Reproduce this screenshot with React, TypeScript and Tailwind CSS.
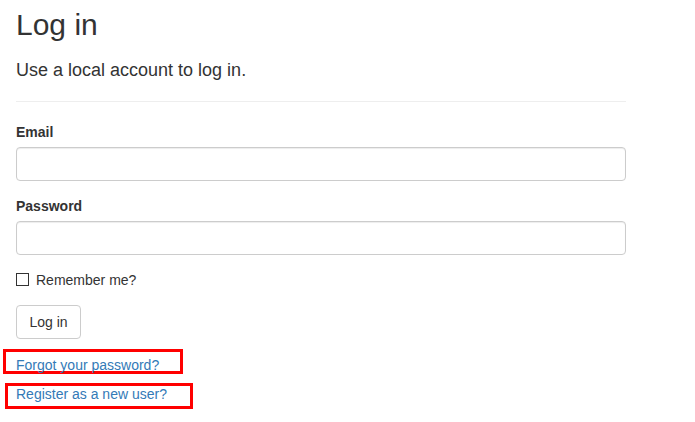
export default function App() {
  return (
    <div className="min-h-screen bg-white px-4 pt-2 text-[14px] text-[#333] font-['Liberation_Sans',Arial,sans-serif]">
      <div className="w-[610px]">
        <h2 className="text-[30px] leading-[1.1] font-normal">Log in</h2>
        <h4 className="mt-5 text-[18px] leading-[1.1] font-normal">Use a local account to log in.</h4>
        <hr className="mt-5 border-0 border-t border-[#eee]" />

        <form onSubmit={(e) => e.preventDefault()}>
          <label className="mt-5 block font-bold leading-5">Email</label>
          <input
            type="email"
            className="mt-[5px] block h-[34px] w-full rounded border border-[#ccc] px-3 shadow-[inset_0_1px_1px_rgba(0,0,0,0.075)] outline-none"
          />

          <label className="mt-[15px] block font-bold leading-5">Password</label>
          <input
            type="password"
            className="mt-[5px] block h-[34px] w-full rounded border border-[#ccc] px-3 shadow-[inset_0_1px_1px_rgba(0,0,0,0.075)] outline-none"
          />

          <div className="mt-[15px] flex h-5 items-center leading-5">
            <span className="block h-[13px] w-[13px] border border-[#333] bg-white" />
            <span className="ml-[7px]">Remember me?</span>
          </div>

          <button
            type="submit"
            className="mt-[15px] block h-[34px] w-[65px] rounded border border-[#ccc] bg-white text-center leading-5 text-[#333]"
          >
            Log in
          </button>
        </form>

        <div className="ml-[-13px] mt-[10px] h-[25px] w-[180px] border-[3px] border-[#ff0000] pl-[10px] pt-[5px] leading-4">
          <span className="cursor-pointer text-[#337ab7]">Forgot your password?</span>
        </div>
        <div className="ml-[-11px] mt-[9px] h-[26px] w-[188px] border-[3px] border-[#ff0000] pl-[8px] leading-4">
          <span className="cursor-pointer text-[#337ab7]">Register as a new user?</span>
        </div>
      </div>
    </div>
  );
}
